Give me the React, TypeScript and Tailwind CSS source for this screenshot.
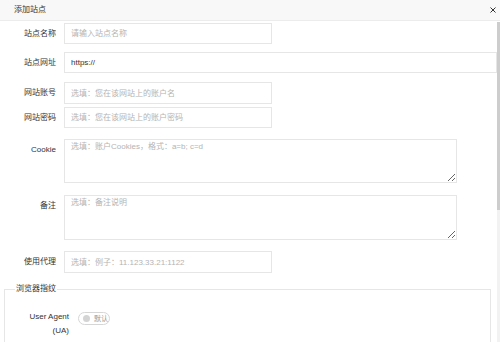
import React from "react";

const font = { fontFamily: '"Liberation Sans", "Noto Sans CJK SC", sans-serif' };

function Label({ children }: { children: React.ReactNode }) {
  return (
    <div className="w-[56px] shrink-0 text-right text-[8px] leading-[10px] text-[#333]">{children}</div>
  );
}

export default function App() {
  const inputCls =
    "h-full border border-[#e6e6e6] bg-white pl-[6px] text-[8px] text-[#333] outline-none placeholder:text-[#b4b4b4]";
  return (
    <div className="w-[500px] h-[342px] overflow-hidden bg-white flex flex-col" style={font}>
      <div className="h-[21px] shrink-0 bg-[#f8f8f8] border-b border-[#ececec] flex items-center justify-between pl-[14px] pr-[4px]">
        <span className="text-[8px] leading-[10px] text-[#333]">添加站点</span>
        <svg width="6" height="6" viewBox="0 0 6 6" className="mt-[-1px]">
          <path d="M0.5 0.5 L5.5 5.5 M5.5 0.5 L0.5 5.5" stroke="#333" strokeWidth="1" />
        </svg>
      </div>
      <div className="flex flex-1 min-h-0 overflow-hidden">
        <div className="flex-1 flex flex-col">
          <div className="mt-[2px] h-[21px] shrink-0 flex items-center">
            <Label>站点名称</Label>
            <input className={`${inputCls} ml-[8px] w-[208px]`} placeholder="请输入站点名称" />
          </div>
          <div className="mt-[8px] h-[21px] shrink-0 flex items-center">
            <Label>站点网址</Label>
            <input className={`${inputCls} ml-[8px] flex-1`} defaultValue="https://" />
          </div>
          <div className="mt-[9px] h-[22px] shrink-0 flex items-center">
            <Label>网站账号</Label>
            <input className={`${inputCls} ml-[8px] w-[208px]`} placeholder="选填：您在该网站上的账户名" />
          </div>
          <div className="mt-[3px] h-[21px] shrink-0 flex items-center">
            <Label>网站密码</Label>
            <input className={`${inputCls} ml-[8px] w-[208px]`} placeholder="选填：您在该网站上的账户密码" />
          </div>
          <div className="mt-[11px] h-[44px] shrink-0 flex items-start">
            <div className="pt-[6px]">
              <Label>Cookie</Label>
            </div>
            <textarea
              className={`${inputCls} ml-[8px] w-[393px] pt-[2px] leading-[10px]`}
              placeholder="选填：账户Cookies，格式：a=b; c=d"
            />
          </div>
          <div className="mt-[12px] h-[45px] shrink-0 flex items-start">
            <div className="pt-[6px]">
              <Label>备注</Label>
            </div>
            <textarea
              className={`${inputCls} ml-[8px] w-[393px] pt-[2px] leading-[10px]`}
              placeholder="选填：备注说明"
            />
          </div>
          <div className="mt-[11px] h-[22px] shrink-0 flex items-center">
            <Label>使用代理</Label>
            <input className={`${inputCls} ml-[8px] w-[208px]`} placeholder="选填：例子：11.123.33.21:1122" />
          </div>
          <fieldset className="mt-[11px] ml-[4px] w-[487px] h-[90px] shrink-0 border border-[#e6e6e6]">
            <legend className="ml-[10px] px-[1px] text-[8px] leading-[10px] text-[#333]">浏览器指纹</legend>
            <div className="mt-[16px] flex items-start">
              <div className="w-[64px] text-right text-[8px] leading-[14px] text-[#333]">
                User Agent
                <br />
                (UA)
              </div>
              <div className="ml-[9px] mt-[2px] w-[32px] h-[13px] rounded-full border border-[#d6d6d6] flex items-center">
                <div className="ml-[4px] w-[7px] h-[7px] rounded-full bg-[#d4d4d4]" />
                <span className="ml-[4px] text-[7px] leading-[8px] text-[#999]">默认</span>
              </div>
            </div>
          </fieldset>
        </div>
        <div className="w-[3px] shrink-0 flex flex-col bg-[#f2f2f2] mt-[1px]">
          <div className="h-[188px] bg-[#cdcdcd]" />
        </div>
      </div>
    </div>
  );
}
